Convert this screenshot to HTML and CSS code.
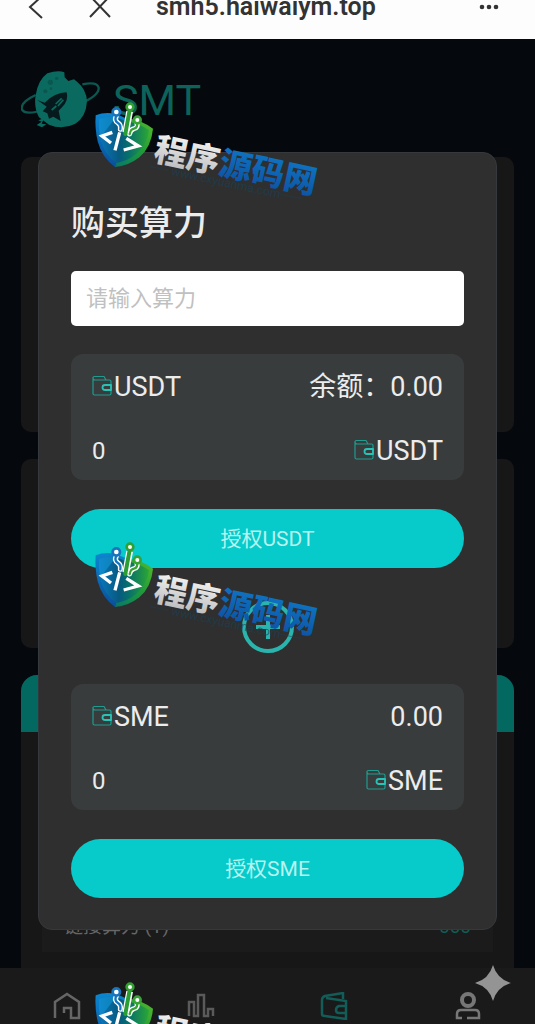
FILE: index.html
```html
<!DOCTYPE html>
<html lang="zh-CN">
<head>
    <meta charset="UTF-8">
    <meta name="viewport" content="width=device-width, initial-scale=1.0">
    <title>购买算力</title>
    <link rel="stylesheet" href="styles.css">
</head>
<body>
    <svg class="defs" width="0" height="0" aria-hidden="true">
        <defs>
            <linearGradient id="shield-blue" x1="0" y1="0" x2="0" y2="1">
                <stop offset="0" stop-color="#0b86cf"/>
                <stop offset="1" stop-color="#0a4f9c"/>
            </linearGradient>
            <linearGradient id="shield-green" x1="1" y1="0" x2="0" y2="1">
                <stop offset="0" stop-color="#57bb28"/>
                <stop offset="0.5" stop-color="#1d9a3c"/>
                <stop offset="1" stop-color="#08766a"/>
            </linearGradient>
            <linearGradient id="shield-face" x1="0" y1="0" x2="1" y2="0">
                <stop offset="0" stop-color="#0b78bd"/>
                <stop offset="0.4" stop-color="#065a80"/>
                <stop offset="0.6" stop-color="#08706a"/>
                <stop offset="1" stop-color="#2ba637"/>
            </linearGradient>
            <linearGradient id="silver" x1="0" y1="0" x2="0" y2="1">
                <stop offset="0" stop-color="#ffffff"/>
                <stop offset="1" stop-color="#b4b4b6"/>
            </linearGradient>
            <linearGradient id="blue" x1="0" y1="0" x2="0" y2="1">
                <stop offset="0" stop-color="#0f7bc9"/>
                <stop offset="1" stop-color="#0d4fa0"/>
            </linearGradient>
        </defs>
        <symbol id="wallet" viewBox="0 0 20 21">
            <g fill="none" stroke="#1f9c90" stroke-width="1.2" stroke-linejoin="round">
                <path d="M1 2V18.5Q1 20 2.500 20H17.500Q19 20 19 18.500V6.500Q19 5 17.500 5H14L12 1.500H2.500Q1 1.500 1 3Q1 5 3 5H14"/>
                <path d="M19 10H13Q10.500 10 10.500 12.500T13 15H19Z" stroke="#25c4b6" stroke-width="1.800"/>
            </g>
        </symbol>
        <symbol id="shield" viewBox="0 0 780 360">
            <path d="M47 76Q75 65 108 72L142 86L105 231Q66 203 53 154Q44 114 47 76Z" fill="url(#shield-blue)"/>
            <path d="M142 84Q188 92 219 116Q214 171 178 202Q144 229 105 231Z" fill="url(#shield-green)"/>
            <path d="M57 86Q80 77 108 82L139 94Q181 102 207 121Q201 164 169 192Q142 214 108 219Q74 194 62 150Q55 116 57 86Z" fill="url(#shield-face)"/>
            <path d="M57 86Q80 77 108 82L60 143Q55 113 57 86Z" fill="#1397d8" opacity=".6"/>
            <g fill="none" stroke-linecap="round" stroke-linejoin="round">
                <path d="M109 79Q102 91 113 98Q124 105 121 118" stroke="#fff" stroke-width="15"/>
                <path d="M109 77Q102 91 113 98Q124 105 121 118" stroke="#1675bd" stroke-width="7"/>
                <path d="M171 101Q174 113 162 116Q151 118 149 132" stroke="#fff" stroke-width="15"/>
                <path d="M171 99Q174 113 162 116Q151 118 149 132" stroke="#36a334" stroke-width="7"/>
                <path d="M149 64L137 128" stroke="#fff" stroke-width="20" stroke-linecap="butt"/>
                <path d="M149 60L136 132" stroke="#2b9d35" stroke-width="12"/>
                <circle cx="109" cy="66" r="11" fill="#fff" stroke="#1675bd" stroke-width="8"/>
                <circle cx="150" cy="51" r="10" fill="#fff" stroke="#329f31" stroke-width="8"/>
                <circle cx="172" cy="90" r="10" fill="#fff" stroke="#36a334" stroke-width="8"/>
            </g>
            <g fill="none" stroke="#fff" stroke-width="10">
                <path d="M97 127L66 138L93 159"/>
                <path d="M119 127L105 181"/>
                <path d="M139 145L175 168L131 180"/>
            </g>
        </symbol>
    </svg>

    <header class="browser-bar">
        <button class="bar-button" aria-label="返回">
            <svg width="16" height="34" viewBox="0 0 16 34"><path d="M13 7L2 17L14 28" fill="none" stroke="#333" stroke-width="2"/></svg>
        </button>
        <button class="bar-button" aria-label="关闭">
            <svg width="24" height="34" viewBox="0 0 24 34"><path d="M2 6L22 27M22 6L2 27" fill="none" stroke="#333" stroke-width="2"/></svg>
        </button>
        <span class="address">smh5.haiwaiym.top</span>
        <button class="bar-button more" aria-label="更多">
            <svg width="20" height="6" viewBox="0 0 20 6" fill="#333"><circle cx="3" cy="3" r="2.300"/><circle cx="10" cy="3" r="2.300"/><circle cx="17" cy="3" r="2.300"/></svg>
        </button>
    </header>

    <main class="page">
        <div class="brand">
            <svg width="80" height="60" viewBox="0 0 240 180" aria-hidden="true">
                <path d="M44 75Q-4 98 3 119Q13 138 77 117M184 43Q229 34 233 53Q235 76 181 99" fill="none" stroke="#0c574f" stroke-width="7"/>
                <path d="M79 10Q111 0 130 7L131 22L142 33L159 28L169 36Q196 58 198 94Q195 142 163 161Q124 181 84 164L54 142Q38 113 44 76Q51 30 79 10Z" fill="#0b6a60"/>
                <path d="M49 90L71 98Q101 68 137 67Q144 91 123 112L113 122L119 153L97 140L84 146L79 130L65 124L77 110Z" fill="#061a1d"/>
                <path d="M104 102L122 85M111 108L127 89M92 120L106 108" stroke="#0b6a60" stroke-width="5"/>
                <path d="M47 165L62 155L52 151L69 145L62 161L76 163L63 172Z" fill="#0b6a60"/>
                <g fill="#095850"><circle cx="88" cy="37" r="8"/><circle cx="107" cy="25" r="5"/><circle cx="73" cy="64" r="6"/><circle cx="90" cy="56" r="4"/></g>
            </svg>
            <span>SMT</span>
        </div>
        <section class="panel panel-large"></section>
        <section class="panel panel-small"></section>
        <section class="panel panel-list">
            <div class="panel-head"></div>
            <div class="list-row">
                <span>链接算力 (T)</span>
                <span class="value">000</span>
            </div>
        </section>
    </main>

    <nav class="tabbar">
        <a href="#home" aria-label="首页">
            <svg width="28" height="28" viewBox="0 0 28 28"><path d="M2 26V10L14 2L26 10V26H18V16H11V21" fill="none" stroke="#666" stroke-width="2.500"/></svg>
        </a>
        <a href="#chart" aria-label="数据">
            <svg width="28" height="28" viewBox="0 0 28 28"><path d="M2 24V10H7V24H11V3H17V24H21V17H26V24" fill="none" stroke="#5a5a5a" stroke-width="2.500"/></svg>
        </a>
        <a href="#wallet" aria-label="钱包">
            <svg width="28" height="28" viewBox="0 0 28 28"><path d="M23 7V1L5 4Q2 5 2 8V22Q2 24 5 24L26 27V9L6 6M26 14H19Q16 15 16 18T19 21H26" fill="none" stroke="#125d57" stroke-width="2.500"/></svg>
        </a>
        <a href="#me" aria-label="我的">
            <svg width="28" height="28" viewBox="0 0 28 28" fill="none" stroke="#777"><circle cx="14" cy="8" r="6" stroke-width="4"/><path d="M8 26H3V22Q3 18 7 18H21Q25 18 25 22V26H13" stroke-width="2.500"/></svg>
        </a>
    </nav>

    <div class="modal" role="dialog" aria-labelledby="modal-title">
        <h1 id="modal-title">购买算力</h1>
        <input class="amount" type="text" aria-label="算力" placeholder="请输入算力">

        <div class="coin-card">
            <div class="coin-row">
                <span class="coin"><svg class="coin-icon"><use href="#wallet"/></svg>USDT</span>
                <span>余额：0.00</span>
            </div>
            <div class="coin-row">
                <span class="count">0</span>
                <span class="coin"><svg class="coin-icon"><use href="#wallet"/></svg>USDT</span>
            </div>
        </div>
        <button class="approve">授权USDT</button>

        <svg class="plus" width="52" height="52" viewBox="0 0 52 52" aria-hidden="true">
            <circle cx="26" cy="26" r="24" fill="none" stroke="#29b5ad" stroke-width="4"/>
            <path d="M26 14V38M14 26H38" stroke="#29b5ad" stroke-width="4"/>
        </svg>

        <div class="coin-card">
            <div class="coin-row">
                <span class="coin"><svg class="coin-icon"><use href="#wallet"/></svg>SME</span>
                <span>0.00</span>
            </div>
            <div class="coin-row">
                <span class="count">0</span>
                <span class="coin"><svg class="coin-icon"><use href="#wallet"/></svg>SME</span>
            </div>
        </div>
        <button class="approve">授权SME</button>
    </div>

    <div class="watermarks">
        <svg class="watermark" viewBox="0 0 260 120">
            <use href="#shield" width="260" height="120"/>
            <g transform="rotate(12 73 68)">
                <text class="mark-name" x="73" y="70" fill="url(#silver)">程序<tspan fill="url(#blue)">源码网</tspan></text>
                <text class="mark-url" x="94" y="81">www.cxyuanma.com</text>
                <path d="M72 77H90M204 77H226" stroke="#1c4054" opacity=".5"/>
            </g>
        </svg>
        <svg class="watermark" viewBox="0 0 260 120">
            <use href="#shield" width="260" height="120"/>
            <g transform="rotate(12 73 68)">
                <text class="mark-name" x="73" y="70" fill="url(#silver)">程序<tspan fill="url(#blue)">源码网</tspan></text>
                <text class="mark-url" x="94" y="81">www.cxyuanma.com</text>
                <path d="M72 77H90M204 77H226" stroke="#1c4054" opacity=".5"/>
            </g>
        </svg>
        <svg class="watermark" viewBox="0 0 260 120">
            <use href="#shield" width="260" height="120"/>
            <g transform="rotate(12 73 68)">
                <text class="mark-name" x="73" y="70" fill="url(#silver)">程序</text>
            </g>
        </svg>
    </div>

    <svg class="sparkle" width="36" height="36" viewBox="0 0 36 36" aria-hidden="true">
        <path d="M18 0Q22 14 36 18Q22 22 18 36Q14 22 0 18Q14 14 18 0Z" fill="#949494"/>
    </svg>
</body>
</html>
```

FILE: styles.css
```css
* {
    box-sizing: border-box;
}
body {
    position: relative;
    display: flex;
    flex-direction: column;
    height: 100vh;
    min-height: 960px;
    margin: 0;
    overflow: hidden;
    background-color: #05090d;
    color: #ececec;
    font-family: Roboto, "Noto Sans CJK SC", sans-serif;
}
.defs {
    position: absolute;
}
button {
    padding: 0;
    border: none;
    background: none;
    font-family: inherit;
    cursor: pointer;
}

/* browser bar */
.browser-bar {
    display: flex;
    align-items: center;
    height: 39px;
    padding: 0 36px 25px 28px;
    overflow: hidden;
    background-color: #fdfdfd;
    color: #333;
}
.bar-button {
    display: flex;
    margin-right: 44px;
}
.address {
    font-size: 25px;
    font-weight: 600;
    line-height: 16px;
}
.bar-button.more {
    margin: 0 0 0 auto;
}

/* page behind the dialog */
.page {
    flex: 1;
    display: flex;
    flex-direction: column;
    gap: 27px;
    padding: 31px 21px 0;
}
.brand {
    display: flex;
    align-items: center;
    gap: 12px;
    height: 60px;
    color: #0d625a;
    font-size: 43px;
    line-height: 60px;
}
.panel {
    border-radius: 10px;
    background-color: #171717;
}
.panel-large {
    height: 275px;
}
.panel-small {
    height: 189px;
}
.panel-list {
    flex: 1;
    display: flex;
    flex-direction: column;
    padding-bottom: 16px;
    border-radius: 16px 16px 0 0;
    overflow: hidden;
}
.panel-head {
    height: 57px;
    background-color: #03685f;
}
.list-row {
    flex: 1;
    display: flex;
    align-items: flex-end;
    justify-content: space-between;
    margin: 0 21px;
    padding: 0 22px 10px;
    background-color: #1b1b1b;
    color: #666;
    font-size: 19px;
    line-height: 30px;
}
.list-row .value {
    color: #125d57;
}
.tabbar {
    display: flex;
    height: 56px;
    padding-top: 24px;
    background-color: #1a1a1a;
}
.tabbar a {
    flex: 1;
    display: flex;
    justify-content: center;
}

/* dialog */
.modal {
    position: absolute;
    top: 152px;
    left: 38px;
    right: 38px;
    display: flex;
    flex-direction: column;
    padding: 46px 32px 31px;
    border: 1px solid #35393d;
    border-radius: 14px;
    background-color: #2f2f2f;
}
.modal h1 {
    margin: 0 0 24px;
    font-size: 34px;
    font-weight: 500;
    line-height: 48px;
}
.amount {
    width: 100%;
    height: 55px;
    margin-bottom: 28px;
    padding: 0 15px;
    border: none;
    border-radius: 5px;
    background-color: #fff;
    font-family: inherit;
    font-size: 22px;
}
.amount::placeholder {
    color: #bfc1c1;
}
.coin-card {
    display: flex;
    flex-direction: column;
    gap: 28px;
    padding: 15px 21px 11px;
    border-radius: 12px;
    background-color: #393c3d;
}
.coin-row {
    display: flex;
    align-items: center;
    justify-content: space-between;
    font-size: 27px;
    line-height: 36px;
}
.coin {
    display: flex;
    align-items: center;
    gap: 2px;
}
.coin-icon {
    width: 20px;
    height: 21px;
    margin-bottom: 3px;
}
.count {
    font-size: 24px;
}
.approve {
    height: 59px;
    margin-top: 29px;
    padding-bottom: 4px;
    border-radius: 30px;
    background-color: #06cbca;
    color: #b8f3f0;
    font-size: 21px;
}
.plus {
    align-self: center;
    margin: 33px 0 31px;
}

/* overlays */
.watermarks {
    position: absolute;
    top: 90px;
    bottom: 0;
    left: 80px;
    display: flex;
    flex-direction: column;
    gap: 320px;
    overflow: hidden;
    pointer-events: none;
}
.watermark {
    flex: none;
    width: 260px;
    height: 120px;
}
.mark-name {
    font-family: "Noto Sans CJK SC", sans-serif;
    font-size: 33px;
    font-weight: 900;
}
.mark-url {
    fill: #1c4054;
    font-size: 12px;
    opacity: 0.7;
}
.sparkle {
    position: absolute;
    right: 24px;
    bottom: 23px;
}
```
